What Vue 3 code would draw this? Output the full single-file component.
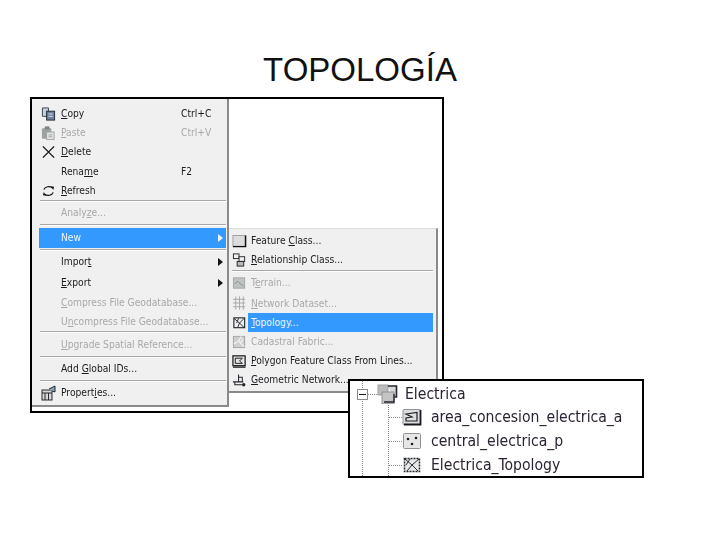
<template>
  <div class="slide">
    <h1 class="title">TOPOLOGÍA</h1>

    <div class="shot">
      <!-- menu principal -->
      <div class="menu">
        <template v-for="item in mainItems" :key="item.key">
          <div v-if="item.sep" class="sep" :style="{ marginTop: item.mt + 'px', marginBottom: item.mb + 'px' }"></div>
          <div
            v-else
            class="row row--main"
            :class="{ 'row--off': item.off, 'row--active': item.active }"
            :style="{ height: item.h + 'px' }"
          >
            <span class="ico">
              <svg v-if="item.icon === 'copy'" viewBox="0 0 16 16" width="15" height="15">
                <path d="M1.500 1.500 H8 V10.500 H1.500 Z" fill="#c5cfda" stroke="#39424e" />
                <rect x="6" y="5" width="8.500" height="9.500" fill="#6f7f9c" stroke="#1f2833" />
                <path d="M8 8 H12.500 M8 10.500 H12.500" stroke="#d7deea" />
              </svg>
              <svg v-else-if="item.icon === 'paste'" viewBox="0 0 16 16" width="15" height="15">
                <rect x="1" y="3" width="10" height="11" rx="1" fill="#9ea3a2" />
                <rect x="4" y="1" width="5" height="3" fill="#7d8180" />
                <rect x="6" y="7" width="8" height="8" fill="#e2e4e4" stroke="#a0a4a3" />
                <path d="M8 10 H12 M8 12 H12" stroke="#a0a4a3" />
              </svg>
              <svg v-else-if="item.icon === 'delete'" viewBox="0 0 16 16" width="15" height="15">
                <path d="M2 2 L14 14 M14 2 L2 14" stroke="#15181c" stroke-width="1.500" fill="none" />
              </svg>
              <svg v-else-if="item.icon === 'refresh'" viewBox="0 0 16 16" width="15" height="15">
                <path d="M3 6.500 A5.500 4.500 0 0 1 12 4.500 M13 9.500 A5.500 4.500 0 0 1 4 11.500" stroke="#15181c" stroke-width="1.300" fill="none" />
                <path d="M10.500 3 L14 3.500 L13 7 Z M5.500 13 L2 12.500 L3 9 Z" fill="#15181c" />
              </svg>
              <svg v-else-if="item.icon === 'props'" viewBox="0 0 16 16" width="16" height="16">
                <rect x="1" y="5" width="10" height="10" fill="#d8d8d8" stroke="#26292d" />
                <path d="M1 8 H11 M4 8 V15 M7.500 8 V15" stroke="#26292d" />
                <path d="M8 4 L14 1 V7 L11 6" fill="#8ea4bd" stroke="#26292d" />
              </svg>
            </span>
            <span class="label">{{ item.a }}<u>{{ item.m }}</u>{{ item.b }}</span>
            <span v-if="item.keys" class="keys">{{ item.keys }}</span>
            <span v-if="item.arrow" class="arrow"></span>
          </div>
        </template>
      </div>

      <!-- submenu New -->
      <div class="submenu">
        <template v-for="item in subItems" :key="item.key">
          <div v-if="item.sep" class="sep sep--sub"></div>
          <div v-else class="row row--sub" :class="{ 'row--off': item.off }" :style="{ height: item.h + 'px' }">
            <span class="ico ico--sub">
              <svg v-if="item.icon === 'feature'" viewBox="0 0 16 16" width="15" height="15">
                <rect x="1" y="2" width="13" height="11.500" fill="#dcdcdc" stroke="#8c8f93" stroke-width="0.800" />
                <path d="M1 14 H14.500 V2" stroke="#111" stroke-width="1.500" fill="none" />
              </svg>
              <svg v-else-if="item.icon === 'rel'" viewBox="0 0 16 16" width="15" height="15">
                <rect x="1.500" y="1.500" width="6" height="5" fill="#f0f0f0" stroke="#22262b" />
                <rect x="7.500" y="4.500" width="6" height="5" fill="#f0f0f0" stroke="#22262b" />
                <rect x="5.500" y="9.500" width="7" height="5" fill="#b8b8b8" stroke="#22262b" />
              </svg>
              <svg v-else-if="item.icon === 'terrain'" viewBox="0 0 16 16" width="15" height="15">
                <rect x="1.500" y="2.500" width="12" height="11" fill="#bfc3c2" stroke="#a2a6a5" />
                <path d="M3 9 L6 6 L9 9 L12 11" stroke="#868a89" fill="none" />
              </svg>
              <svg v-else-if="item.icon === 'network'" viewBox="0 0 16 16" width="15" height="15">
                <path d="M1 4 H14 M1 8 H14 M1 12 H14 M4 1 V15 M8 1 V15 M12 1 V15" stroke="#a2a6a5" fill="none" />
              </svg>
              <svg v-else-if="item.icon === 'topo'" viewBox="0 0 16 16" width="15" height="15">
                <rect x="2" y="2.500" width="11.500" height="10.500" fill="#eee" stroke="#23272c" stroke-width="1.200" />
                <path d="M2 3 L8 8 L6 13 M13 3 L8 8 L13 13 M7 3 L5 8" stroke="#23272c" fill="none" />
              </svg>
              <svg v-else-if="item.icon === 'cadastral'" viewBox="0 0 16 16" width="15" height="15">
                <rect x="1.500" y="2" width="12" height="12" fill="#cdd0cf" stroke="#a2a6a5" />
                <path d="M2 10 L7 7 L10 2 M7 7 L13 13 M12 5 L9 9" stroke="#f2f2f2" fill="none" stroke-width="1.300" />
              </svg>
              <svg v-else-if="item.icon === 'poly'" viewBox="0 0 16 16" width="15" height="15">
                <rect x="1" y="2.500" width="13" height="10.500" fill="#e4e4e4" stroke="#15181c" stroke-width="1.300" />
                <path d="M3.500 5 L11 5 L8 8 L11 10.500 L3.500 10.500 Z" fill="none" stroke="#15181c" />
                <path d="M1 14.500 H14.500" stroke="#15181c" stroke-width="1.500" />
              </svg>
              <svg v-else-if="item.icon === 'geo'" viewBox="0 0 16 16" width="15" height="15">
                <path d="M1 10 H12 M7 2 V10 M7 5 H11 V10 M3 10 V13 H11" stroke="#22262b" fill="none" stroke-width="1.100" />
                <circle cx="12.500" cy="13" r="1.800" fill="#22262b" />
              </svg>
            </span>
            <span class="label" :class="{ 'label--active': item.active }">{{ item.a }}<u>{{ item.m }}</u>{{ item.b }}</span>
          </div>
        </template>
      </div>
    </div>

    <!-- recorte del arbol del catalogo -->
    <div class="tree">
      <span class="dots dots--a"></span>
      <span class="dots dots--b"></span>
      <div class="tree-row tree-row--root">
        <span class="expander"></span>
        <span class="link link--short"></span>
        <svg viewBox="0 0 22 20" width="22" height="20" class="tree-ico">
          <rect x="1" y="1" width="10" height="10" fill="#bcbcbc" stroke="#9a9da1" />
          <path d="M11 2 H19.500 V13 H16" fill="#d8d8d8" stroke="#23262c" stroke-width="1.600" />
          <rect x="5" y="8" width="12" height="12" fill="#c4c4c4" stroke="#8b8f94" />
          <path d="M7 18 H17 V10" stroke="#23262c" fill="none" stroke-width="1.400" />
        </svg>
        <span class="tree-name tree-name--root">Electrica</span>
      </div>
      <div v-for="leaf in leaves" :key="leaf.name" class="tree-row">
        <span class="link"></span>
        <svg viewBox="0 0 20 18" width="20" height="18" class="tree-ico">
          <template v-if="leaf.kind === 'area'">
            <rect x="1" y="1.500" width="17.500" height="15" rx="1" fill="#dedede" stroke="#8f9397" />
            <path d="M2 16.500 H18.500 V2" stroke="#15181c" stroke-width="1.800" fill="none" />
            <path d="M4 6 L15 4.500 V13 H4 V10 L10 9 Z" fill="none" stroke="#1d2025" stroke-width="1.200" />
          </template>
          <template v-else-if="leaf.kind === 'point'">
            <rect x="1.500" y="1.500" width="17" height="15" rx="1" fill="#e6e6e6" stroke="#8f9397" />
            <circle cx="6" cy="7" r="1.300" fill="#1b1e22" />
            <circle cx="14" cy="6" r="1.300" fill="#1b1e22" />
            <circle cx="10" cy="12" r="1.300" fill="#1b1e22" />
          </template>
          <template v-else>
            <rect x="2.500" y="2.500" width="15" height="13" fill="#e8e8e8" stroke="#25282d" stroke-width="1.500" stroke-dasharray="2 1" />
            <path d="M3 3 L10 9 L17 3 M10 9 L5 15 M10 9 L16 15 M8 3 L4 9" stroke="#25282d" fill="none" />
          </template>
        </svg>
        <span class="tree-name">{{ leaf.name }}</span>
      </div>
    </div>
  </div>
</template>

<script setup>
const mainItems = [
  { key: 'copy', h: 19, icon: 'copy', a: '', m: 'C', b: 'opy', keys: 'Ctrl+C' },
  { key: 'paste', h: 19, icon: 'paste', a: '', m: 'P', b: 'aste', keys: 'Ctrl+V', off: true },
  { key: 'delete', h: 20, icon: 'delete', a: '', m: 'D', b: 'elete' },
  { key: 'rename', h: 19, a: 'Rena', m: 'm', b: 'e', keys: 'F2' },
  { key: 'refresh', h: 19, icon: 'refresh', a: '', m: 'R', b: 'efresh' },
  { key: 's1', sep: true, mt: 0, mb: 0 },
  { key: 'analyze', h: 22, a: 'Analy', m: 'z', b: 'e...', off: true },
  { key: 's2', sep: true, mt: 0, mb: 2 },
  { key: 'new', h: 20, a: '', m: '', b: 'New', active: true, arrow: true },
  { key: 's3', sep: true, mt: 1, mb: 1 },
  { key: 'import', h: 20, a: 'Impor', m: 't', b: '', arrow: true },
  { key: 'export', h: 21, a: '', m: 'E', b: 'xport', arrow: true },
  { key: 'compress', h: 20, a: '', m: 'C', b: 'ompress File Geodatabase...', off: true },
  { key: 'uncompress', h: 18, a: 'U', m: 'n', b: 'compress File Geodatabase...', off: true },
  { key: 's4', sep: true, mt: 0, mb: 0 },
  { key: 'upgrade', h: 23, a: '', m: 'U', b: 'pgrade Spatial Reference...', off: true },
  { key: 's5', sep: true, mt: 0, mb: 0 },
  { key: 'ids', h: 22, a: 'Add ', m: 'G', b: 'lobal IDs...' },
  { key: 's6', sep: true, mt: 0, mb: 0 },
  { key: 'props', h: 22, icon: 'props', a: 'Propert', m: 'i', b: 'es...' },
]

const subItems = [
  { key: 'feature', h: 19, icon: 'feature', a: 'Feature ', m: 'C', b: 'lass...' },
  { key: 'rel', h: 19, icon: 'rel', a: '', m: 'R', b: 'elationship Class...' },
  { key: 's1', sep: true },
  { key: 'terrain', h: 21, icon: 'terrain', a: 'T', m: 'e', b: 'rrain...', off: true },
  { key: 'network', h: 20, icon: 'network', a: '', m: 'N', b: 'etwork Dataset...', off: true },
  { key: 'topo', h: 19, icon: 'topo', a: '', m: 'T', b: 'opology...', active: true },
  { key: 'cadastral', h: 19, icon: 'cadastral', a: 'Cadastral Fabric...', m: '', b: '', off: true },
  { key: 'poly', h: 19, icon: 'poly', a: '', m: 'P', b: 'olygon Feature Class From Lines...' },
  { key: 'geo', h: 19, icon: 'geo', a: '', m: 'G', b: 'eometric Network...' },
]

const leaves = [
  { name: 'area_concesion_electrica_a', kind: 'area' },
  { name: 'central_electrica_p', kind: 'point' },
  { name: 'Electrica_Topology', kind: 'topo' },
]
</script>

<style scoped>
.slide {
  position: relative;
  width: 720px;
  height: 540px;
  overflow: hidden;
  background: #fff;
}

.title {
  margin: 0;
  padding-top: 51px;
  height: 46px;
  font: 400 33px/38px "Liberation Sans", Arial, sans-serif;
  color: #111;
  text-align: center;
}

.shot {
  position: relative;
  box-sizing: border-box;
  width: 414px;
  height: 316px;
  margin-left: 30px;
  border: 2px solid #000;
  background: #fff;
  font: 400 10.2px "DejaVu Sans Condensed", "DejaVu Sans", sans-serif;
  color: #1c1c20;
}

.menu {
  box-sizing: border-box;
  width: 197px;
  height: 308px;
  padding: 5px 1px 0 7px;
  background: #f0f0f0;
  border-right: 2px solid #8a8a8a;
  border-bottom: 2px solid #8a8a8a;
}

.row {
  display: flex;
  align-items: center;
  position: relative;
  padding-left: 22px;
  white-space: nowrap;
}

.label,
.keys,
.tree-name,
.ico {
  filter: blur(0.3px);
}

.row--main .label {
  margin-top: -1px;
}

.row--off {
  color: #a9a9a9;
}

.row--active {
  background: #3399ff;
  color: #eef4fb;
}

.ico {
  position: absolute;
  left: 2px;
  top: 50%;
  transform: translateY(-50%);
  display: flex;
}

.ico--sub {
  left: 1px;
}

.keys {
  position: absolute;
  left: 142px;
  margin-top: -1px;
}

.arrow {
  position: absolute;
  right: 3px;
  width: 0;
  height: 0;
  border-left: 5px solid #111;
  border-top: 4.500px solid transparent;
  border-bottom: 4.500px solid transparent;
}

.row--active .arrow {
  border-left-color: #eef4fb;
}

.sep {
  height: 1px;
  margin-left: 1px;
  background: #a8a8a8;
  border-bottom: 1px solid #fff;
}

.submenu {
  position: absolute;
  left: 197px;
  top: 129px;
  box-sizing: border-box;
  width: 209px;
  height: 165px;
  padding: 2px 3px 0 2px;
  background: #f0f0f0;
  border-right: 2px solid #8a8a8a;
  border-bottom: 2px solid #8a8a8a;
  border-top: 1px solid #dcdcdc;
}

.row--sub {
  padding-left: 20px;
}

.label {
  display: block;
}

.label--active {
  align-self: stretch;
  flex: 1;
  margin-left: -3px;
  padding-left: 3px;
  line-height: 19px;
  background: #3399ff;
  color: #eef4fb;
  filter: none;
}

.sep--sub {
  margin: 1px 0 0 1px;
}

.tree {
  position: absolute;
  left: 348px;
  top: 379px;
  box-sizing: border-box;
  width: 296px;
  height: 99px;
  padding: 2px 0 0 38px;
  border: 2px solid #000;
  background: #fff;
  font: 400 15.6px "DejaVu Sans Condensed", "DejaVu Sans", sans-serif;
  color: #2a2230;
}

.dots {
  position: absolute;
  width: 0;
  border-left: 1px dotted #8a8a8a;
}

.dots--a {
  left: 12px;
  top: 0;
  bottom: 0;
}

.dots--b {
  left: 38px;
  top: 20px;
  bottom: 0;
}

.tree-row {
  display: flex;
  align-items: center;
  height: 24px;
  gap: 9px;
}

.tree-row--root {
  height: 22px;
  gap: 0;
  margin-left: -31px;
}

.expander {
  flex: none;
  box-sizing: border-box;
  width: 11px;
  height: 11px;
  border: 1px solid #8a8a8a;
  background: linear-gradient(#1c1c1c, #1c1c1c) center / 7px 1px no-repeat #fff;
  position: relative;
}

.link {
  flex: none;
  width: 14px;
  margin-right: -9px;
  border-top: 1px dotted #8a8a8a;
}

.link--short {
  width: 9px;
  margin-right: 0;
}

.tree-ico {
  flex: none;
  position: relative;
  background: #fff;
}

.tree-name {
  white-space: nowrap;
}

.tree-name--root {
  margin-left: 6px;
}
</style>

<style>
body {
  background: #fff;
}
</style>
